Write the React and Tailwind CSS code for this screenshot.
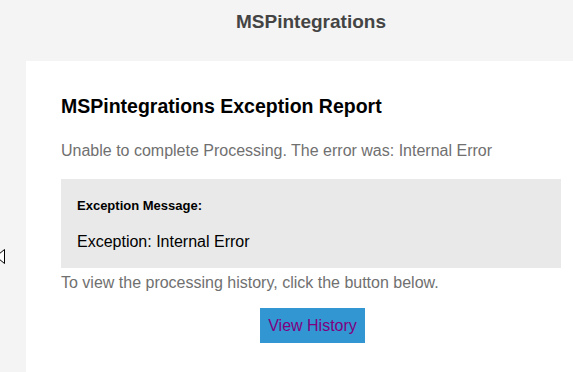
import React from 'react'

const App = () => {
    return (
        <div className="relative w-[573px] h-[372px] overflow-hidden bg-[#f4f4f4] font-['Liberation_Sans',Arial,sans-serif]">
            <div className="w-[622px]">
                <div className="h-[61px] pt-[11px] text-center">
                    <h1 className="text-[19px] leading-[22px] font-bold text-[#444444]">MSPintegrations</h1>
                </div>
                <div className="ml-[26px] w-[570px] bg-white px-[35px] pt-[34px] pb-10">
                    <h2 className="text-[19.5px] leading-[22px] font-bold text-black">MSPintegrations Exception Report</h2>
                    <p className="mt-[24px] text-[16px] leading-[20px] text-[#707070]">Unable to complete Processing. The error was: Internal Error</p>
                    <div className="mt-[18px] bg-[#e9e9e9] px-4 pt-[19px] pb-[16px]">
                        <p className="text-[13px] leading-[16px] font-bold text-black">Exception Message:</p>
                        <p className="mt-[18px] text-[16px] leading-[20px] text-black">Exception: Internal Error</p>
                    </div>
                    <p className="mt-[5px] text-[16px] leading-[20px] text-[#707070]">To view the processing history, click the button below.</p>
                    <div className="mt-[15px] flex justify-center pl-[3px]">
                        <a href="#" className="bg-[#3196d2] px-[8.5px] py-[7px] text-[16px] leading-[21px] text-[#800080]">View History</a>
                    </div>
                </div>
            </div>
            <svg className="absolute left-0 top-[248px]" width="8" height="18" viewBox="0 0 8 18">
                <path d="M-4 8.5 L4.5 1.5 L4.5 15.5 Z" fill="white" stroke="black" strokeWidth="1" />
            </svg>
        </div>
    )
}

export default App
